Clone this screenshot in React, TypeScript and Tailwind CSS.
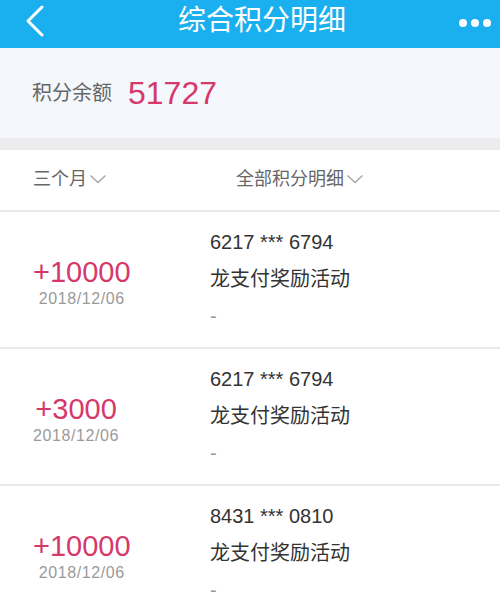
const FONT = { fontFamily: '"Liberation Sans", "Noto Sans CJK SC", sans-serif' };

const records = [
  { amount: "+10000", date: "2018/12/06", card: "6217 *** 6794", title: "龙支付奖励活动", note: "-" },
  { amount: "+3000", date: "2018/12/06", card: "6217 *** 6794", title: "龙支付奖励活动", note: "-" },
  { amount: "+10000", date: "2018/12/06", card: "8431 *** 0810", title: "龙支付奖励活动", note: "-" },
];

function ChevronDown() {
  return (
    <svg width="18" height="10" viewBox="0 0 18 10" className="ml-[2px]">
      <path d="M1.5 1.5 L9 8.5 L16.5 1.5" fill="none" stroke="#a3a3a3" strokeWidth="1.3" />
    </svg>
  );
}

export default function App() {
  return (
    <div className="w-[500px] h-[605px] overflow-hidden bg-white" style={FONT}>
      {/* nav bar */}
      <div className="flex h-[48px] items-center bg-[#1aafee] pb-[6px] pl-[25px] pr-[9px]">
        <svg width="20" height="32" viewBox="0 0 20 32">
          <path d="M17 2 L3 16 L17 30" fill="none" stroke="#ffffff" strokeWidth="3" strokeLinecap="round" strokeLinejoin="round" />
        </svg>
        <span className="ml-[133px] text-[28px] leading-none text-white">综合积分明细</span>
        <div className="ml-auto flex gap-[4px] pt-[4px]">
          <span className="h-[8px] w-[8px] rounded-full bg-white" />
          <span className="h-[8px] w-[8px] rounded-full bg-white" />
          <span className="h-[8px] w-[8px] rounded-full bg-white" />
        </div>
      </div>

      {/* balance */}
      <div className="flex h-[90px] items-center bg-[#f4f7fb] pl-[32px]">
        <span className="text-[20px] text-[#666666]">积分余额</span>
        <span className="ml-[16px] text-[32px] leading-none text-[#d6386b]">51727</span>
      </div>
      <div className="h-[12px] bg-[#ececee]" />

      {/* filters */}
      <div className="flex h-[62px] items-center border-b-2 border-[#e9e9e9] pl-[33px] pb-[2px]">
        <div className="flex items-center text-[18px] text-[#666666]">
          三个月
          <ChevronDown />
        </div>
        <div className="ml-[129px] flex items-center text-[18px] text-[#666666]">
          全部积分明细
          <ChevronDown />
        </div>
      </div>

      {/* records */}
      {records.map((r, i) => (
        <div key={i} className="flex h-[137px] items-center border-b-2 border-[#e9e9e9]">
          <div className="flex w-[210px] pl-[33px] pt-[6px]">
            <div className="flex flex-col items-center">
              <span className="text-[29px] leading-[32px] text-[#d6386b]">{r.amount}</span>
              <span className="text-[16px] leading-[22px] tracking-[0.6px] text-[#9a9a9a]">{r.date}</span>
            </div>
          </div>
          <div className="flex flex-col text-[20px] leading-[37px]">
            <span className="text-[#333333]">{r.card}</span>
            <span className="text-[#333333]">{r.title}</span>
            <span className="text-[#999999]">{r.note}</span>
          </div>
        </div>
      ))}
    </div>
  );
}
